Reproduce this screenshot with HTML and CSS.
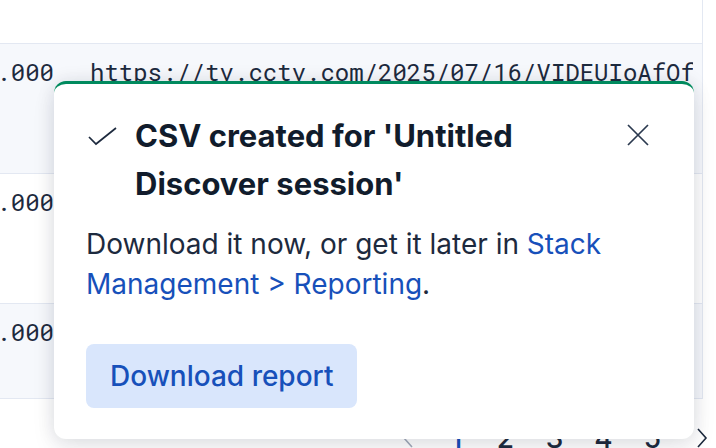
FILE: index.html
```html
<!DOCTYPE html>
<html lang="en">
<head>
<meta charset="utf-8">
<title>CSV created</title>
<link rel="stylesheet" href="styles.css">
</head>
<body>
<div class="page">
  <div class="grid">
    <div class="row row-head"></div>
    <div class="row striped">
      <div class="cell cell-time"><span>Jul 16, 2025 @ 08:42:17.000</span></div>
      <div class="cell cell-url">https://tv.cctv.com/2025/07/16/VIDEUIoAfOfXk2hQm7sPdL9c250716.shtml</div>
    </div>
    <div class="row">
      <div class="cell cell-time"><span>Jul 16, 2025 @ 08:40:03.000</span></div>
      <div class="cell cell-url">https://tv.cctv.com/2025/07/16/VIDEmQ3kZp8sTyNw4bRr1xLf250716.shtml</div>
    </div>
    <div class="row striped row-last">
      <div class="cell cell-time"><span>Jul 16, 2025 @ 08:37:51.000</span></div>
      <div class="cell cell-url">https://tv.cctv.com/2025/07/16/VIDEaH7cW2nPqYt9uJkL3sDe250716.shtml</div>
    </div>
  </div>
  <nav class="pagination">
    <span class="pg pg-arrow pg-disabled">
      <svg viewBox="0 0 16 24" width="16" height="24"><path d="M12 3 L4 12 L12 21" fill="none" stroke="currentColor" stroke-width="1.6"/></svg>
    </span>
    <span class="pg pg-current">1</span>
    <span class="pg">2</span>
    <span class="pg">3</span>
    <span class="pg">4</span>
    <span class="pg">5</span>
    <span class="pg pg-arrow">
      <svg viewBox="0 0 16 24" width="16" height="24"><path d="M4 3 L12 12 L4 21" fill="none" stroke="currentColor" stroke-width="1.6"/></svg>
    </span>
  </nav>
</div>

<div class="toast" role="alert">
  <div class="toast-header">
    <svg class="toast-icon" viewBox="0 0 32 32" width="32" height="32"><path d="M3 17 L10 24 L30 8" fill="none" stroke="currentColor" stroke-width="1.7"/></svg>
    <h2 class="toast-title">CSV created for 'Untitled Discover session'</h2>
    <button class="toast-close" aria-label="Dismiss toast">
      <svg viewBox="0 0 22 22" width="22" height="22"><path d="M1 1 L21 21 M21 1 L1 21" fill="none" stroke="currentColor" stroke-width="1.7"/></svg>
    </button>
  </div>
  <p class="toast-body">Download it now, or get it later in <a class="link" href="#">Stack Management &gt; Reporting</a>.</p>
  <button class="btn">Download report</button>
</div>
</body>
</html>
```
FILE: styles.css
```css
* { box-sizing: border-box; }
html, body {
  margin: 0;
  padding: 0;
  width: 716px;
  height: 448px;
  overflow: hidden;
  background: #ffffff;
}
body {
  font-family: Inter, "Noto Sans", sans-serif;
  position: relative;
}
.page {
  width: 716px;
}
.grid {
  width: 703px;
  border-right: 1px solid #e3e8f2;
}
.row {
  display: flex;
  height: 130px;
  border-bottom: 1px solid #e3e8f2;
  background: #ffffff;
}
.row-head {
  height: 44px;
}
.row.striped {
  background: #f6f8fc;
}
.row-last {
  height: 95px;
}
.cell {
  font-family: "Roboto Mono", "DejaVu Sans Mono", "Liberation Mono", monospace;
  font-size: 24px;
  line-height: 28px;
  color: #1d2a3e;
  padding-top: 14px;
  white-space: nowrap;
  overflow: hidden;
}
.cell-time {
  width: 72px;
  flex: none;
  display: flex;
  justify-content: flex-end;
  padding-right: 18px;
}
.cell-time span { flex: none; }
.cell-url {
  flex: 1;
  min-width: 0;
  margin-left: 18px;
  margin-right: 9px;
}
.pagination {
  display: flex;
  align-items: center;
  height: 64px;
  margin-top: 7px;
  padding-left: 383px;
}
.pg {
  flex: none;
  width: 49px;
  text-align: center;
  font-size: 28px;
  color: #1d2a3e;
  font-weight: 500;
}
.pg-current { color: #1750ba; }
.pg-arrow {
  display: flex;
  justify-content: center;
  color: #1d2a3e;
}
.pg-disabled { color: #a2abba; }

.toast {
  position: absolute;
  left: 54px;
  top: 81px;
  width: 640px;
  height: 358px;
  background: #ffffff;
  border-top: 3px solid #008a5e;
  border-radius: 12px;
  padding: 28px 32px 32px 32px;
  box-shadow: 0 0 18px rgba(20, 30, 50, 0.10), 0 10px 24px rgba(20, 30, 50, 0.08);
}
.toast-header {
  display: flex;
  align-items: flex-start;
}
.toast-icon {
  flex: none;
  margin-top: 8px;
  margin-right: 17px;
  color: #1d2a3e;
}
.toast-title {
  flex: 1;
  margin: 0;
  font-size: 31px;
  line-height: 48px;
  font-weight: 700;
  color: #111c2c;
}
.toast-close {
  flex: none;
  width: 40px;
  height: 40px;
  margin-top: 3px;
  margin-right: 4px;
  padding: 0;
  border: 0;
  background: transparent;
  color: #2b394f;
  display: flex;
  align-items: center;
  justify-content: center;
}
.toast-body {
  margin: 16px 0 0 0;
  font-size: 28px;
  line-height: 40px;
  color: #1d2a3e;
}
.link {
  color: #1750ba;
  text-decoration: none;
}
.btn {
  margin-top: 40px;
  height: 64px;
  padding: 0 24px;
  border: 0;
  border-radius: 8px;
  background: #d9e6fc;
  color: #1750ba;
  font-family: Inter, "Noto Sans", sans-serif;
  font-size: 28px;
  font-weight: 500;
}
```
